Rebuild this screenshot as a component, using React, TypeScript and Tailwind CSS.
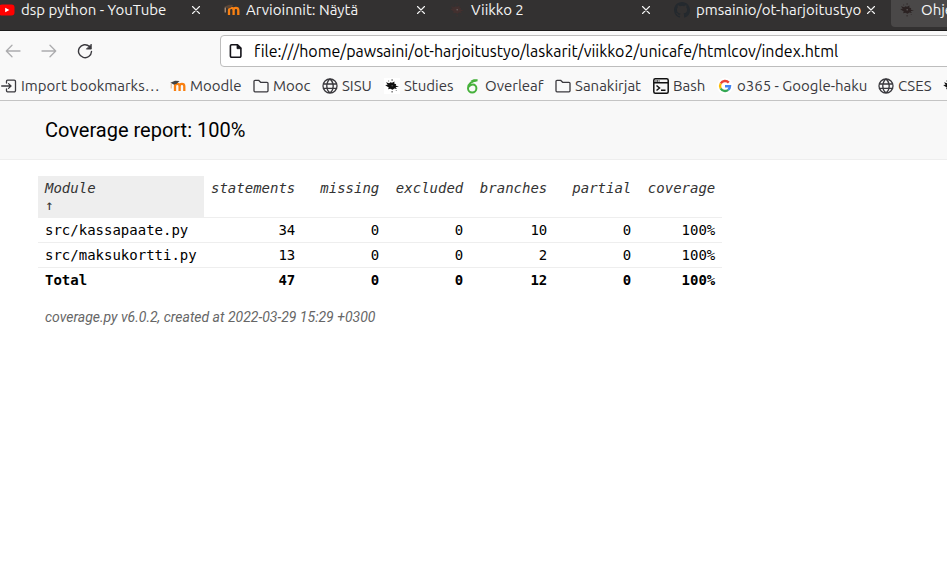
import type { ReactNode } from "react";

const uiFont = "font-['Ubuntu','Noto_Sans',sans-serif] [font-variant-ligatures:none]";

function MoodleIcon({ cap = "#444444" }: { cap?: string }) {
  return (
    <svg viewBox="0 0 16 16" className="size-4 shrink-0" aria-hidden="true">
      <path d="M5 13V8.200a2.200 2.200 0 0 1 4.600 0V13M9.600 8.200a2.200 2.200 0 0 1 4.700 0V13" fill="none" stroke="#f98012" strokeWidth="2.300" />
      <path d="M.3 4.800 5 2.800l4.600.3L7.200 5.200l-3 1.500z" fill={cap} />
      <path d="M1.200 5.500v5" stroke="#e0b490" strokeWidth="1" />
    </svg>
  );
}

function SplatIcon({ color, plate = "none" }: { color: string; plate?: string }) {
  return (
    <svg viewBox="0 0 16 16" className="size-4 shrink-0" aria-hidden="true">
      <path d="M0 0h16v16H0z" fill={plate} />
      <path
        d="M2 4.300 5.200 5.200 6.500 4.300 8 4.800 10.600 3.600 10.200 5.600 12.200 6.200 11.700 7.400 15 8.900 11.600 9.100 12.800 11 10.300 10.600 8.600 11.700 6.300 10.700 4 11.300 4.800 9.400 2.800 8.300 1.200 7 3.700 6.700z"
        fill={color}
      />
      <path d="M7.500 1.300h1.200v1.500H7.500zM7.500 13h1.200v1.500H7.500zM4.200 2.600h.9v.9h-.9zM11.800 12.200h.9v.9h-.9z" fill={color} opacity=".7" />
      <circle cx="8.200" cy="7.800" r=".8" fill="#888" opacity=".6" />
    </svg>
  );
}

function YouTubeIcon() {
  return (
    <svg viewBox="0 0 16 16" className="size-4 shrink-0" aria-hidden="true">
      <rect x="0" y="2.500" width="15.500" height="11" rx="3" fill="#ff0000" />
      <path d="m6.200 5.700 4.200 2.300-4.200 2.300z" fill="#fff" />
    </svg>
  );
}

function GitHubIcon() {
  return (
    <svg viewBox="0 0 16 16" className="size-4 shrink-0" aria-hidden="true">
      <path
        fill="#24292e"
        d="M8 0C3.58 0 0 3.58 0 8c0 3.54 2.29 6.53 5.47 7.59.4.07.55-.17.55-.38 0-.19-.01-.82-.01-1.49-2.01.37-2.53-.49-2.69-.94-.09-.23-.48-.94-.82-1.13-.28-.15-.68-.52-.01-.53.63-.01 1.08.58 1.23.82.72 1.21 1.87.87 2.33.66.07-.52.28-.87.51-1.07-1.78-.2-3.64-.89-3.64-3.95 0-.87.31-1.59.82-2.15-.08-.2-.36-1.02.08-2.12 0 0 .67-.21 2.2.82a7.6 7.6 0 0 1 4 0c1.53-1.04 2.2-.82 2.2-.82.44 1.1.16 1.92.08 2.12.51.56.82 1.27.82 2.15 0 3.07-1.87 3.75-3.65 3.95.29.25.54.73.54 1.48 0 1.07-.01 1.93-.01 2.2 0 .21.15.46.55.38A8.01 8.01 0 0 0 16 8c0-4.42-3.58-8-8-8z"
      />
    </svg>
  );
}

function LineIcon({ d, width = 1.3 }: { d: string; width?: number }) {
  return (
    <svg viewBox="0 0 16 16" className="size-4 shrink-0" fill="none" stroke="currentColor" strokeWidth={width} strokeLinecap="round" strokeLinejoin="round" aria-hidden="true">
      <path d={d} />
    </svg>
  );
}

const shapes = {
  import: "M5.5 5V3.2a1 1 0 0 1 1-1h6.700a1.300 1.300 0 0 1 1.300 1.300v9a1.300 1.300 0 0 1-1.300 1.300H6.500a1 1 0 0 1-1-1V11M.7 8h9M7.500 5.600 10 8l-2.500 2.400",
  folder: "M1 12.800V3.300a1 1 0 0 1 1-1h3.600l2 2h6.400a1 1 0 0 1 1 1v7.500a1 1 0 0 1-1 1H2a1 1 0 0 1-1-1z",
  globe: "M8 1a7 7 0 1 0 0 14A7 7 0 1 0 8 1zM8 1c-4.300 3.600-4.300 10.400 0 14M8 1c4.300 3.600 4.300 10.400 0 14M1.300 6h13.400M1.300 10.400h13.400",
  back: "M15 8H1.500M7 2.300 1.300 8 7 13.700",
  forward: "M1 8h13.500M9 2.300 14.700 8 9 13.700",
  close: "m4.500 4.500 7 7m0-7-7 7",
};

function OverleafIcon() {
  return (
    <svg viewBox="0 0 16 16" className="size-4 shrink-0" fill="none" stroke="#47b13c" aria-hidden="true">
      <path d="M12.500 2.200C7 2.800 3 6 3 10.200a4.200 4.200 0 1 0 8.400 0c0-2-1.500-3.600-3.500-3.600-1.700 0-3.200 1-4.300 2.400" strokeWidth="2" />
      <path d="M5.500 3c2-2 5-2.200 7.300-1.200C11 4 8.300 4.300 5.500 3z" fill="#47b13c" stroke="none" />
    </svg>
  );
}

function TerminalIcon() {
  return (
    <svg viewBox="0 0 16 16" className="size-4 shrink-0" fill="none" stroke="#111" strokeWidth="1.500" aria-hidden="true">
      <rect x=".8" y=".8" width="14.400" height="14.400" rx="1.500" />
      <path d="M1 4.800h14M3.500 7.500 6.500 10l-3 2.500M8 12.300h4.500" />
      <path d="M2.500 2.900h4" strokeDasharray="1 .6" />
    </svg>
  );
}

function GoogleIcon() {
  return (
    <svg viewBox="0 0 16 16" className="size-4 shrink-0" fill="none" strokeWidth="2.400" aria-hidden="true">
      <circle cx="8" cy="8" r="8" fill="#fff" />
      <path d="M11.800 4.600A5 5 0 0 0 3.700 5.500" stroke="#ea4335" />
      <path d="M3.700 5.500a5 5 0 0 0 0 5" stroke="#fbbc05" />
      <path d="M3.700 10.500a5 5 0 0 0 7.500 1.300" stroke="#34a853" />
      <path d="M11.200 11.800A5 5 0 0 0 13 8.200H8" stroke="#4285f4" />
    </svg>
  );
}

function PageIcon() {
  return (
    <svg viewBox="0 0 16 16" className="size-4 shrink-0" fill="none" stroke="#15141a" strokeWidth="1.600" strokeLinejoin="round" aria-hidden="true">
      <path d="M3.600 1.700h5.900l3.400 3.400v8a1.200 1.200 0 0 1-1.200 1.200H3.600a1.200 1.200 0 0 1-1.200-1.200V2.900a1.200 1.200 0 0 1 1.200-1.200z" />
      <path d="M9 1.700v4h4z" fill="#15141a" strokeWidth=".8" />
    </svg>
  );
}

function ReloadIcon() {
  return (
    <svg viewBox="0 0 16 16" className="size-4 shrink-0" fill="none" stroke="currentColor" strokeWidth="1.400" strokeLinecap="round" aria-hidden="true">
      <path d="M14.500 8.500A6.500 6.500 0 1 1 12.500 3.500" />
      <path d="M14.300 1.500v4.600H9.700z" fill="currentColor" strokeWidth=".8" strokeLinejoin="round" />
    </svg>
  );
}

const tabs: { title: string; icon: ReactNode; active?: boolean }[] = [
  { title: "dsp python - YouTube", icon: <YouTubeIcon /> },
  { title: "Arvioinnit: Näytä", icon: <MoodleIcon cap="#5c4636" /> },
  { title: "Viikko 2", icon: <SplatIcon color="#43302f" /> },
  { title: "pmsainio/ot-harjoitustyo", icon: <GitHubIcon /> },
  { title: "Ohje", icon: <SplatIcon color="#2b2222" />, active: true },
];

const bookmarks: { title: string; icon: ReactNode; width: string }[] = [
  { title: "Import bookmarks…", icon: <LineIcon d={shapes.import} />, width: "w-[169px]" },
  { title: "Moodle", icon: <MoodleIcon />, width: "w-[83px]" },
  { title: "Mooc", icon: <LineIcon d={shapes.folder} />, width: "w-[69px]" },
  { title: "SISU", icon: <LineIcon d={shapes.globe} />, width: "w-[62px]" },
  { title: "Studies", icon: <SplatIcon color="#111" plate="#fff" />, width: "w-[81px]" },
  { title: "Overleaf", icon: <OverleafIcon />, width: "w-[90px]" },
  { title: "Sanakirjat", icon: <LineIcon d={shapes.folder} />, width: "w-[98px]" },
  { title: "Bash", icon: <TerminalIcon />, width: "w-16" },
  { title: "o365 - Google-haku", icon: <GoogleIcon />, width: "w-[161px]" },
  { title: "CSES", icon: <LineIcon d={shapes.globe} />, width: "w-16" },
  { title: "", icon: <SplatIcon color="#111" />, width: "w-16" },
];

const columns = ["statements", "missing", "excluded", "branches", "partial", "coverage"];
const rows = [
  ["src/kassapaate.py", "34", "0", "0", "10", "0", "100%"],
  ["src/maksukortti.py", "13", "0", "0", "2", "0", "100%"],
];
const total = ["Total", "47", "0", "0", "12", "0", "100%"];

export default function App() {
  return (
    <div className="min-h-screen overflow-hidden bg-white text-black">
      <div className={`${uiFont} text-[15px] leading-5`}>
        <div className="flex h-[31px] overflow-hidden border-b border-[#1c1b1b] bg-[#333131] text-[#f5f5f5]">
          <div className="-ml-[9px] flex" role="tablist">
            {tabs.map((tab) => (
              <div
                key={tab.title}
                className={`flex h-[27px] w-[225px] shrink-0 items-center rounded-b pr-3 pb-[7px] pl-2 ${tab.active ? "bg-[#4a4848]" : ""}`}
              >
                <button role="tab" aria-selected={!!tab.active} className="flex min-w-0 flex-1 items-center gap-1.5 whitespace-nowrap">
                  {tab.icon}
                  <span>{tab.title}</span>
                </button>
                <button aria-label={`Close ${tab.title}`}>
                  <LineIcon d={shapes.close} width={1.1} />
                </button>
              </div>
            ))}
          </div>
        </div>

        <div className="border-b border-[#c4c4c4] bg-[#f9f9f9] text-[#3a393e]">
          <div className="flex h-10 items-center">
            <div className="flex w-[220px] shrink-0 items-center gap-5 pl-[5px]">
              <button aria-label="Back" className="text-[#acacae]"><LineIcon d={shapes.back} /></button>
              <button aria-label="Forward" className="text-[#acacae]"><LineIcon d={shapes.forward} /></button>
              <button aria-label="Reload"><ReloadIcon /></button>
            </div>
            <label className="-mr-1 flex h-8 flex-1 items-center gap-2.5 rounded border border-[#bdbdbd] bg-white pl-[7px]">
              <PageIcon />
              <input
                aria-label="Address"
                className="min-w-0 flex-1 bg-transparent text-base text-black outline-none"
                defaultValue="file:///home/pawsaini/ot-harjoitustyo/laskarit/viikko2/unicafe/htmlcov/index.html"
              />
            </label>
          </div>
          <nav aria-label="Bookmarks" className="flex h-[29px] items-center overflow-hidden pl-px">
            {bookmarks.map((item) => (
              <a key={item.title} href="#" className={`flex shrink-0 items-center gap-1 whitespace-nowrap ${item.width}`}>
                {item.icon}
                <span>{item.title}</span>
              </a>
            ))}
          </nav>
        </div>
      </div>

      <header className="border-b border-[#eeeeee] bg-[#f8f8f8] px-[45px] py-4 font-['Roboto',sans-serif]">
        <h1 className="text-xl leading-[26px]">Coverage report: 100%</h1>
      </header>

      <main className="px-[38px] pt-4">
        <table className="border-collapse font-['DejaVu_Sans_Mono',monospace] text-sm leading-4">
          <thead>
            <tr className="border-b border-[#eeeeee] align-top text-[#333333] italic">
              <th className="w-[166px] bg-[#eeeeee] px-[7px] py-1 text-left font-normal">
                Module
                <span className="block pt-px not-italic">↑</span>
              </th>
              {columns.map((name) => (
                <th key={name} className="min-w-[84px] px-[7px] pt-1 text-right font-normal">{name}</th>
              ))}
            </tr>
          </thead>
          <tbody>
            {rows.map((row) => (
              <tr key={row[0]} className="border-b border-[#eeeeee]">
                {row.map((cell, i) => (
                  <td key={i} className={`px-[7px] py-1 ${i === 0 ? "text-left" : "text-right"}`}>{cell}</td>
                ))}
              </tr>
            ))}
          </tbody>
          <tfoot>
            <tr className="font-bold">
              {total.map((cell, i) => (
                <td key={i} className={`px-[7px] py-1 ${i === 0 ? "text-left" : "text-right"}`}>{cell}</td>
              ))}
            </tr>
          </tfoot>
        </table>
      </main>

      <footer className="px-[45px] pt-4 font-['Roboto',sans-serif] text-sm leading-[18px] text-[#666666] italic">
        <p>coverage.py v6.0.2, created at 2022-03-29 15:29 +0300</p>
      </footer>
    </div>
  );
}
